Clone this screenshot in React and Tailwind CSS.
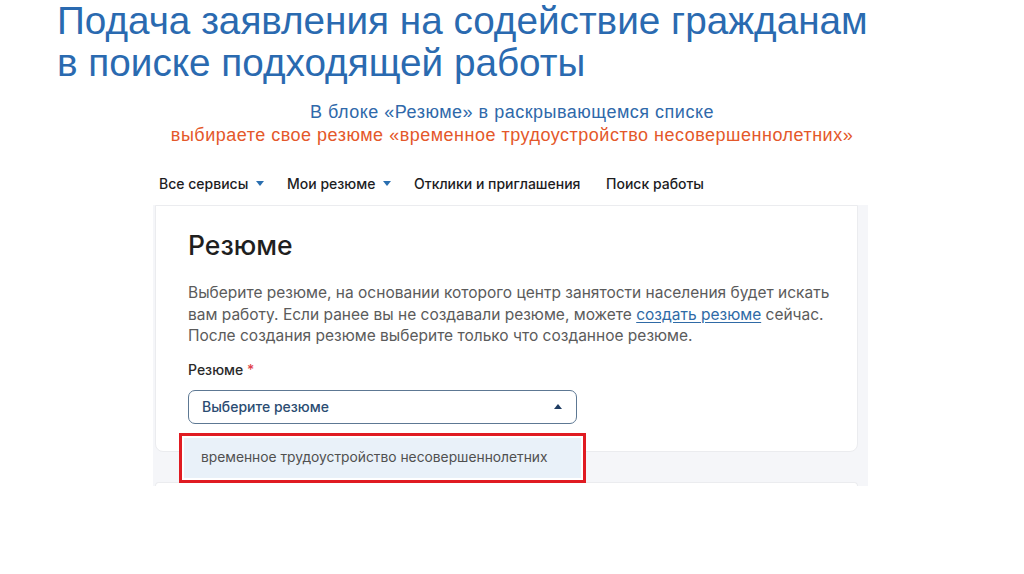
export default function App() {
  return (
    <div className="relative h-[574px] w-[1024px] overflow-hidden bg-white">
      <h1 className="pl-[57px] pt-0 text-[38.7px] font-normal leading-[42px] text-[#2a6ab0]" style={{ fontFamily: '"Liberation Sans", Arial, sans-serif' }}>
        Подача заявления на содействие гражданам
        <br />
        в поиске подходящей работы
      </h1>

      <div className="mt-[17px] text-center text-[18px] leading-[23px] tracking-[0.5px]" style={{ fontFamily: '"Liberation Sans", Arial, sans-serif' }}>
        <p className="text-[#2f69aa]">В блоке «Резюме» в раскрывающемся списке</p>
        <p className="text-[#e4582a]">выбираете свое резюме «временное трудоустройство несовершеннолетних»</p>
      </div>

      <div className="ml-[153px] mt-[26px] w-[715px]" style={{ fontFamily: "Inter, 'Noto Sans', sans-serif" }}>
        <nav className="flex h-[20px] items-center pl-[6px] text-[14px] font-medium text-[#1d1d1f]">
          <span className="flex w-[128px] items-center gap-[8px]">
            Все сервисы
            <span className="inline-block h-0 w-0 border-x-[4px] border-t-[5px] border-x-transparent border-t-[#2a6fb0]" />
          </span>
          <span className="flex w-[127px] items-center gap-[8px]">
            Мои резюме
            <span className="inline-block h-0 w-0 border-x-[4px] border-t-[5px] border-x-transparent border-t-[#2a6fb0]" />
          </span>
          <span className="w-[192px]">Отклики и приглашения</span>
          <span>Поиск работы</span>
        </nav>

        <div className="mt-[12px] flex flex-col bg-[#f5f6f9] pr-[10px]">
          <div className="ml-[2px] rounded-b-lg border border-[#ebecef] bg-white pb-[27px] pl-[32px] pt-[22px]">
            <h2 className="text-[26.5px] font-medium leading-[34px] text-[#1f1f1f]">Резюме</h2>
            <p className="mt-[20px] text-[15.5px] leading-[21.5px] text-[#5b5b5b]">
              Выберите резюме, на основании которого центр занятости населения будет искать
              <br />
              вам работу. Если ранее вы не создавали резюме, можете{" "}
              <span className="text-[#2f6aa6] underline underline-offset-2">создать резюме</span> сейчас.
              <br />
              После создания резюме выберите только что созданное резюме.
            </p>
            <div className="mt-[13px] text-[14px] font-medium leading-[20px] text-[#2a2a2a]">
              Резюме <span className="text-[#e0424a]">*</span>
            </div>
            <div className="relative mt-[10px] w-[389px]">
              <div className="flex h-[34px] items-center justify-between rounded-[7px] border border-[#5d7893] pl-[13px] pr-[14px] text-[14px] font-medium text-[#2b4c72]">
                <span>Выберите резюме</span>
                <span className="inline-block h-0 w-0 border-x-[4px] border-b-[5px] border-x-transparent border-b-[#1f3d63]" />
              </div>
              <div className="absolute left-[-9px] top-[43px] h-[50px] w-[407px] border-[3px] border-[#e01b22] bg-white p-[2px]">
                <div className="flex h-full items-center bg-[#e9f1f9] pl-[17px] text-[13.8px] text-[#505050]">
                  временное трудоустройство несовершеннолетних
                </div>
              </div>
            </div>
          </div>
          <div className="h-[30px]" />
          <div className="ml-[2px] h-[4px] rounded-t-lg border border-b-0 border-[#ebecef] bg-white" />
        </div>
      </div>
    </div>
  );
}
